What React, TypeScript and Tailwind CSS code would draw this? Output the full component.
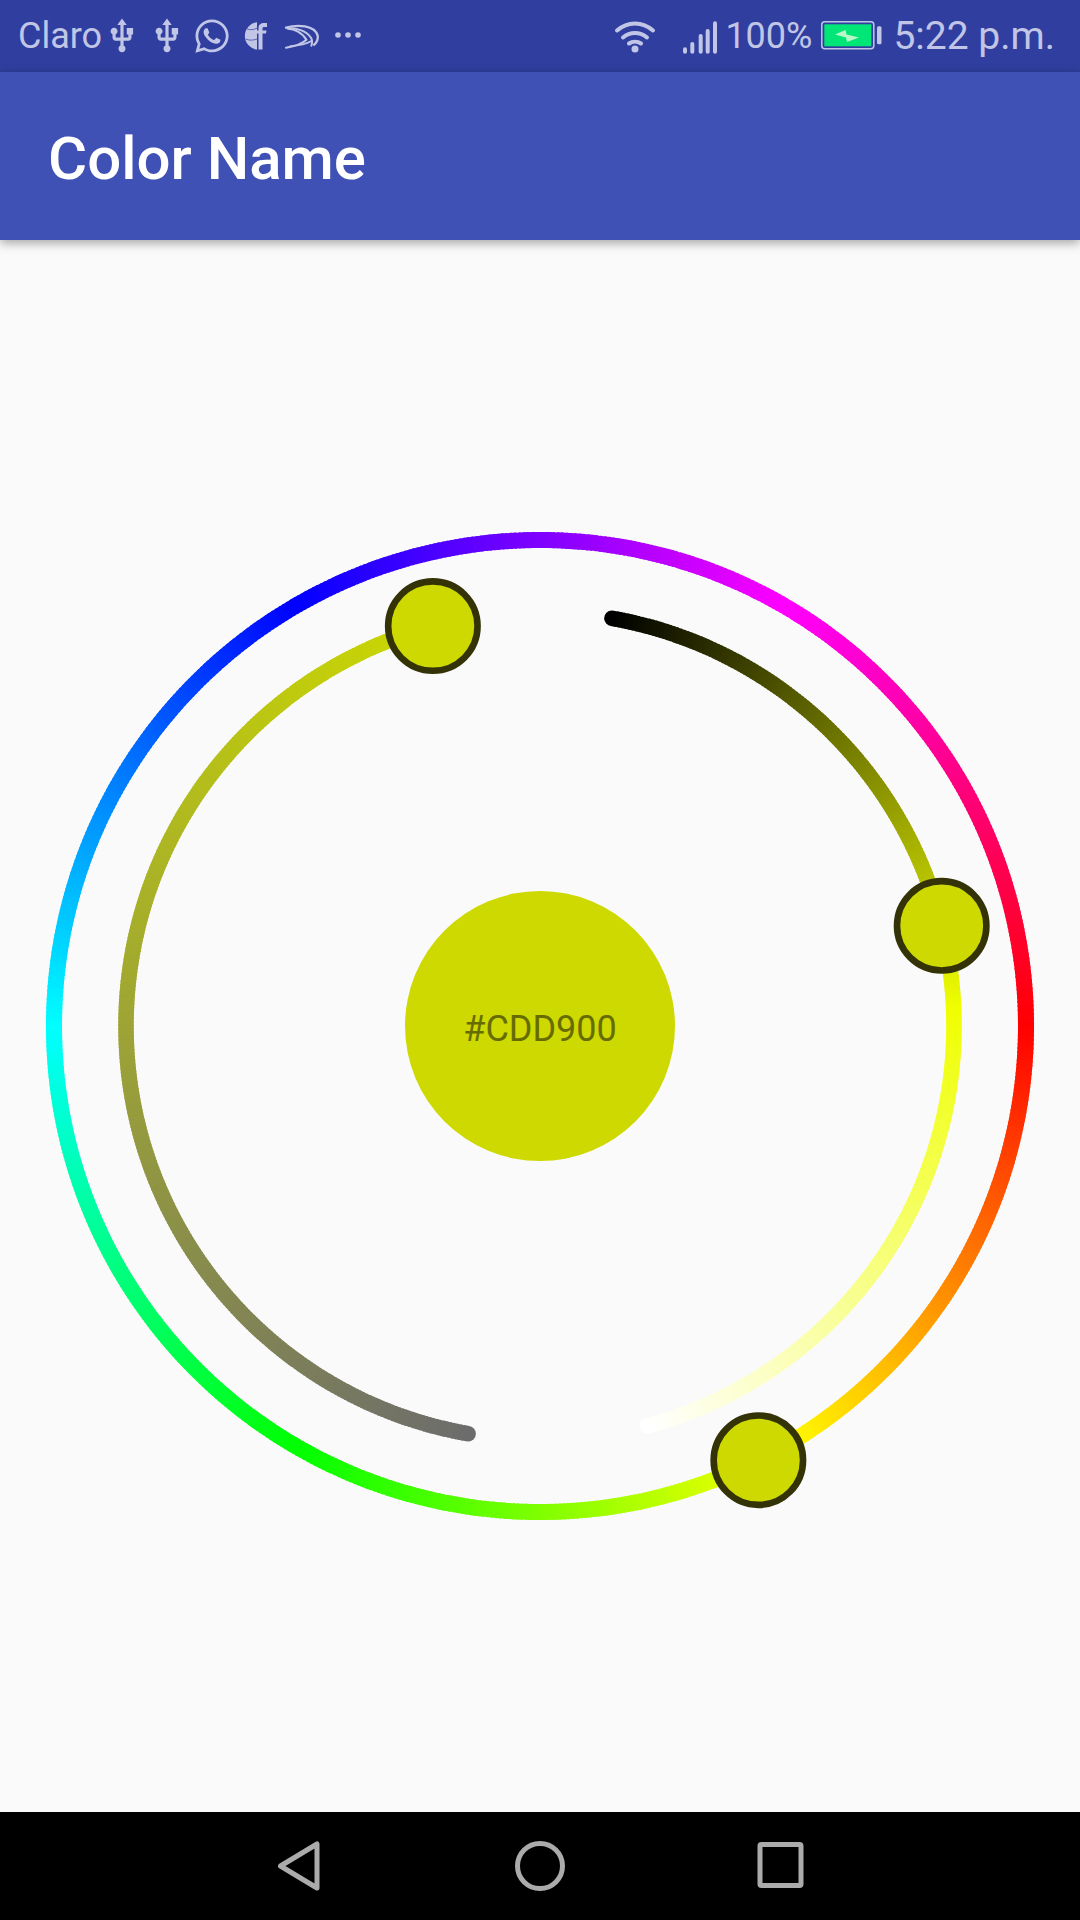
import React from "react";
import { FaWhatsapp } from "react-icons/fa";

const C = 500;
const cx = 540;
const HUE = 63.7;

function pt(r: number, deg: number) {
  const a = ((deg - 90) * Math.PI) / 180;
  return [cx + r * Math.cos(a), C + r * Math.sin(a)];
}

function seg(r: number, a: number, b: number) {
  const [x1, y1] = pt(r, a);
  const [x2, y2] = pt(r, b);
  return `M${x1.toFixed(3)} ${y1.toFixed(3)}A${r} ${r} 0 0 1 ${x2.toFixed(3)} ${y2.toFixed(3)}`;
}

function GradientArc({ r, w, from, to, color }: { r: number; w: number; from: number; to: number; color: (t: number) => string }) {
  const n = Math.round((to - from) * 2);
  const items = [];
  for (let i = 0; i < n; i++) {
    const a = from + ((to - from) * i) / n;
    const b = from + ((to - from) * (i + 1)) / n + (i < n - 1 ? 0.25 : 0);
    items.push(<path key={i} d={seg(r, a, b)} stroke={color(i / (n - 1))} strokeWidth={w} fill="none" />);
  }
  const [sx, sy] = pt(r, from);
  const [ex, ey] = pt(r, to);
  return (
    <g>
      <circle cx={sx} cy={sy} r={w / 2} fill={color(0)} />
      <circle cx={ex} cy={ey} r={w / 2} fill={color(1)} />
      {items}
    </g>
  );
}

function Thumb({ r, deg }: { r: number; deg: number }) {
  const [x, y] = pt(r, deg);
  return <circle cx={x} cy={y} r={44.7} fill="#CDD900" stroke="#333307" strokeWidth={6.6} />;
}

function Wheel() {
  return (
    <svg width="1080" height="1000" viewBox="0 0 1080 1000" className="absolute inset-0">
      <GradientArc r={486} w={16} from={0} to={360} color={(t) => `hsl(${(t * 360 + 270) % 360} 100% 50%)`} />
      <GradientArc r={414} w={15.5} from={10} to={165} color={(t) => `hsl(${HUE} 100% ${t * 100}%)`} />
      <GradientArc r={414} w={15.5} from={190} to={345} color={(t) => `hsl(${HUE} ${t * 100}% 42.5%)`} />
      <Thumb r={486} deg={153.3} />
      <Thumb r={414} deg={76} />
      <Thumb r={414} deg={345} />
    </svg>
  );
}

const ink = "#c1c6e6";

function Usb({ className }: { className: string }) {
  return (
    <svg viewBox="0 0 24 24" width="38" height="38" fill={ink} className={className}>
      <path d="M15 7v4h1v2h-3V5h2l-3-4-3 4h2v8H8v-2.07c.7-.37 1.2-1.08 1.2-1.93 0-1.21-.99-2.2-2.2-2.2-1.21 0-2.2.99-2.2 2.2 0 .85.5 1.56 1.2 1.93V13c0 1.11.89 2 2 2h3v3.05c-.71.37-1.2 1.1-1.2 1.95 0 1.22.99 2.2 2.2 2.2 1.21 0 2.2-.98 2.2-2.2 0-.85-.49-1.58-1.2-1.95V15h3c1.11 0 2-.89 2-2v-2h1V7h-4z" />
    </svg>
  );
}

function Globe({ className }: { className: string }) {
  return (
    <svg viewBox="0 0 24 30" width="24" height="30" className={className}>
      <path d="M13 1.2A13.8 13.8 0 0 0 13 28.6Z" fill={ink} />
      <path d="M14.5 28.6V12.6H12.6V9.4H14.5V7C14.5 3.5 17 2 20 2H23V6H20.5C19 6 18.5 6.5 18.5 7.5V9.4H22.5L22 12.6H18.5V28.6Z" fill={ink} />
      <path d="M3 8C6 9 10 9 13 7M1.5 18C5 19.5 9 19.5 13 18" stroke="#303F9F" strokeWidth="0.7" fill="none" />
    </svg>
  );
}

function Swift({ className }: { className: string }) {
  return (
    <svg viewBox="140 30 110 80" width="36.7" height="26.7" className={className} fill="none" stroke={ink} strokeLinecap="round">
      <path d="M146 44C180 34 232 36 241 68C243 78 238 90 230 95" strokeWidth="7" />
      <path d="M150 46C175 44 208 52 222 76C226 84 224 92 222 98" strokeWidth="6" />
      <path d="M152 47C170 48 195 58 207 80" strokeWidth="6" />
      <path d="M146 104C170 100 195 92 207 80" strokeWidth="6" />
      <path d="M158 100C180 98 205 94 222 84" strokeWidth="5" />
    </svg>
  );
}

function Wifi({ className }: { className: string }) {
  return (
    <svg viewBox="0 0 44 36" width="44" height="36" className={className} fill="none" stroke={ink} strokeWidth="4" strokeLinecap="round">
      <path d="M4 12.5C14.5 3 29.5 3 40 12.5" />
      <path d="M10 19.500C17 13.500 27 13.500 34 19.500" />
      <path d="M16 25.500C19.500 23 24.500 23 28 25.500" />
      <circle cx="22" cy="31" r="3.500" fill={ink} stroke="none" />
    </svg>
  );
}

function Signal({ className }: { className: string }) {
  const bars = [
    [3, 45.3],
    [10.3, 40],
    [18.7, 32],
    [25.7, 27],
    [33, 19.3],
  ];
  return (
    <svg viewBox="0 16 36 37" width="36" height="37" className={className}>
      {bars.map(([x, t]) => (
        <rect key={x} x={x - 2} y={t} width="4" height={51.7 - t} rx="2" fill={ink} />
      ))}
    </svg>
  );
}

function Battery({ className }: { className: string }) {
  return (
    <svg viewBox="0 0 62 30" width="62" height="30" className={className}>
      <rect x="0.800" y="0.800" width="52" height="27" rx="3" fill="none" stroke={ink} strokeWidth="1.500" />
      <rect x="3.300" y="3.300" width="47" height="22" fill="#00e676" />
      <rect x="56" y="5.300" width="4.500" height="18" rx="1.500" fill={ink} />
      <path d="M14 13.500L24.500 9L25.500 13.500L38 16.500L26 21L25 16.500Z" fill="#b9f6ca" />
    </svg>
  );
}

export default function App() {
  return (
    <div className="flex h-[1920px] w-[1080px] flex-col bg-[#fafafa] font-['Roboto',sans-serif]">
      <div className="flex h-[72px] items-center justify-between bg-[#303F9F] pl-[18px] pr-[25px] text-[#c1c6e6]">
        <div className="flex items-center">
          <span className="text-[36px] leading-none">Claro</span>
          <Usb className="ml-[1px]" />
          <Usb className="ml-[7px]" />
          <FaWhatsapp className="ml-[7px] text-[38px]" />
          <Globe className="ml-[13px]" />
          <Swift className="ml-[16px]" />
          <svg viewBox="0 0 26 6" width="26" height="6" className="ml-[14px] mt-[-2px]" fill="#c1c6e6">
            <circle cx="3" cy="3" r="2.800" />
            <circle cx="13" cy="3" r="2.800" />
            <circle cx="23" cy="3" r="2.800" />
          </svg>
        </div>
        <div className="flex items-center">
          <Wifi className="mt-[-1px]" />
          <Signal className="ml-[25px]" />
          <span className="ml-[7px] text-[36px] leading-none">100%</span>
          <Battery className="ml-[9px]" />
          <span className="ml-[10px] text-[39px] leading-none">5:22 p.m.</span>
        </div>
      </div>
      <div className="relative z-10 flex h-[168px] items-center bg-[#3F51B5] pl-[48px] pt-[5px] shadow-[0_3px_10px_rgba(0,0,0,0.35)]">
        <span className="text-[60px] font-medium leading-none text-white">Color Name</span>
      </div>
      <main className="flex flex-1 items-center justify-center">
        <div className="relative flex h-[1000px] w-[1080px] items-center justify-center">
          <Wheel />
          <div className="relative flex h-[270px] w-[270px] items-center justify-center rounded-full bg-[#CDD900] pt-[5px] text-[36px] text-[#676c00]">
            #CDD900
          </div>
        </div>
      </main>
      <div className="flex h-[108px] items-center justify-center gap-[181px] bg-black">
        <svg viewBox="0 0 60 60" width="60" height="60" fill="none" stroke="#ababab" strokeWidth="5" strokeLinejoin="round">
          <path d="M12 30L48.500 8V52Z" transform="translate(-0.500 0)" />
        </svg>
        <svg viewBox="0 0 60 60" width="60" height="60" fill="none" stroke="#ababab" strokeWidth="5">
          <circle cx="30" cy="30" r="22.500" />
        </svg>
        <svg viewBox="0 0 60 60" width="60" height="60" fill="none" stroke="#ababab" strokeWidth="5" strokeLinejoin="round">
          <rect x="9" y="8.500" width="41" height="41" rx="1.500" />
        </svg>
      </div>
    </div>
  );
}
